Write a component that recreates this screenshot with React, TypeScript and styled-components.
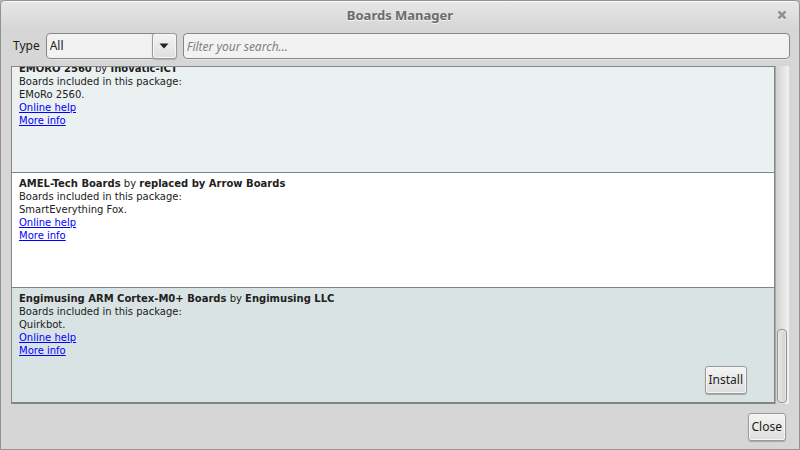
import React from "react";
import styled, { createGlobalStyle } from "styled-components";

const GlobalStyle = createGlobalStyle`
  * { box-sizing: border-box; }
  body { margin: 0; background: #b5b5b5; }
`;

const Window = styled.div`
  display: flex;
  flex-direction: column;
  height: 100vh;
  border: 1px solid #929292;
  border-radius: 5px 5px 0 0;
  box-shadow: inset 0 1px 0 #fafafa;
  background: linear-gradient(#e7e7e7, #d6d6d6 28px);
  color: #212121;
  font: 12px/18px "Noto Sans", sans-serif;
`;

const TitleBar = styled.header`
  display: grid;
  grid-template-columns: 24px 1fr 24px;
  align-items: center;
  height: 27px;
  padding: 0 5px;
`;

const Title = styled.h1`
  grid-column: 2;
  margin: 0;
  text-align: center;
  font-size: 13px;
  line-height: 18px;
  font-weight: 700;
  color: #6b6b6b;
  text-shadow: 0 1px 0 #f4f4f4;
`;

const CloseIconButton = styled.button`
  display: flex;
  align-items: center;
  justify-content: center;
  height: 18px;
  padding: 0;
  border: 0;
  background: none;
`;

const Toolbar = styled.div`
  display: flex;
  align-items: center;
  gap: 6px;
  padding: 5px 9px 7px 12px;
`;

const Label = styled.label`
  flex: none;
`;

const Combo = styled.div`
  display: grid;
  grid-template-columns: 1fr 25px;
  width: 131px;
  height: 26px;
`;

const Select = styled.select`
  appearance: none;
  grid-area: 1 / 1 / 2 / 3;
  width: 100%;
  margin: 0;
  padding: 0 28px 0 3px;
  border: 1px solid #868686;
  border-radius: 4px;
  background: #f2f2f2;
  box-shadow: 0 1px 0 #e6e6e6;
  color: inherit;
  font: inherit;
`;

const ComboArrow = styled.span`
  grid-area: 1 / 2 / 2 / 3;
  z-index: 1;
  display: flex;
  align-items: center;
  justify-content: center;
  border: 1px solid #9a9a9a;
  border-radius: 3px;
  background: linear-gradient(#f4f4f4, #dedede);
  box-shadow: inset 0 0 0 1px #f6f6f6, 0 1px 1px #b0b0b0;
  pointer-events: none;
`;

const SearchInput = styled.input`
  flex: 1;
  min-width: 0;
  height: 26px;
  padding: 0 3px;
  border: 1px solid #868686;
  border-radius: 4px;
  background: #f2f2f2;
  box-shadow: 0 1px 0 #e6e6e6;
  color: inherit;
  font: inherit;
  &::placeholder { color: #808080; font-style: italic; opacity: 1; }
`;

const ListArea = styled.main`
  flex: 1;
  min-height: 0;
  display: flex;
  margin: 0 10px;
`;

const List = styled.ul`
  flex: 1;
  display: flex;
  flex-direction: column;
  justify-content: flex-end;
  overflow: hidden;
  margin: 0;
  padding: 0;
  list-style: none;
  border: 1px solid #868686;
  box-shadow: 1px 0 0 #a8a8a8;
`;

const Row = styled.li<{ $tone: string }>`
  flex: none;
  display: flex;
  justify-content: space-between;
  align-items: flex-end;
  height: 115px;
  padding: 4px 27px 8px 7px;
  border-bottom: 1px solid #7f8485;
  background: ${(p) => p.$tone};
`;

const Details = styled.div`
  align-self: flex-start;
  font: 10px/13px "DejaVu Sans", sans-serif;
`;

const Line = styled.p`
  margin: 0;
`;

const Link = styled.a`
  display: block;
  width: max-content;
  color: #0000ff;
  text-decoration: underline;
`;

const Button = styled.button`
  height: 28px;
  padding: 0 3px;
  border: 1px solid #9a9a9a;
  border-radius: 3px;
  background: linear-gradient(#f4f4f4, #dedede);
  box-shadow: inset 0 0 0 1px #f6f6f6, 0 1px 1px #a8a8a8;
  color: inherit;
  font: inherit;
`;

const ScrollTrack = styled.div`
  display: flex;
  flex-direction: column;
  justify-content: flex-end;
  width: 13px;
  margin-left: 1px;
  padding: 1px 2px 1px 1px;
  background: linear-gradient(90deg, #d2d2d2, #f2f2f2);
`;

const ScrollThumb = styled.div`
  height: 22%;
  border: 1px solid #929292;
  border-radius: 4px;
  background: linear-gradient(90deg, #e6e6e6, #d2d2d2);
  box-shadow: inset 0 0 0 1px #e9e9e9;
`;

const Footer = styled.footer`
  display: flex;
  justify-content: flex-end;
  padding: 9px 13px 8px;
`;

const boards = [
  { name: "EMORO 2560", maker: "Inovatic-ICT", included: "EMoRo 2560.", tone: "#ebf1f1" },
  { name: "AMEL-Tech Boards", maker: "replaced by Arrow Boards", included: "SmartEverything Fox.", tone: "#ffffff" },
  { name: "Engimusing ARM Cortex-M0+ Boards", maker: "Engimusing LLC", included: "Quirkbot.", tone: "#dae3e3", selected: true },
];

export default function App() {
  return (
    <>
      <GlobalStyle />
      <Window>
        <TitleBar>
          <Title>Boards Manager</Title>
          <CloseIconButton aria-label="Close window">
            <svg width="10" height="10" viewBox="0 0 10 10" fill="none" strokeWidth="2.6">
              <path d="M1.5 2.5l7 7M8.5 2.5l-7 7" stroke="#f5f5f5" />
              <path d="M1.5 1.5l7 7M8.5 1.5l-7 7" stroke="#929292" />
            </svg>
          </CloseIconButton>
        </TitleBar>
        <Toolbar>
          <Label htmlFor="type">Type</Label>
          <Combo>
            <Select id="type" defaultValue="All">
              <option>All</option>
            </Select>
            <ComboArrow aria-hidden="true">
              <svg width="10" height="6" viewBox="0 0 10 6">
                <path d="M0.5 0.5h9L5 5.5z" fill="#212121" />
              </svg>
            </ComboArrow>
          </Combo>
          <SearchInput aria-label="Filter your search" placeholder="Filter your search..." />
        </Toolbar>
        <ListArea>
          <List>
            {boards.map((board) => (
              <Row key={board.name} $tone={board.tone}>
                <Details>
                  <Line>
                    <b>{board.name}</b> by <b>{board.maker}</b>
                  </Line>
                  <Line>Boards included in this package:</Line>
                  <Line>{board.included}</Line>
                  <Link href="#help">Online help</Link>
                  <Link href="#info">More info</Link>
                </Details>
                {board.selected && <Button>Install</Button>}
              </Row>
            ))}
          </List>
          <ScrollTrack>
            <ScrollThumb />
          </ScrollTrack>
        </ListArea>
        <Footer>
          <Button>Close</Button>
        </Footer>
      </Window>
    </>
  );
}
